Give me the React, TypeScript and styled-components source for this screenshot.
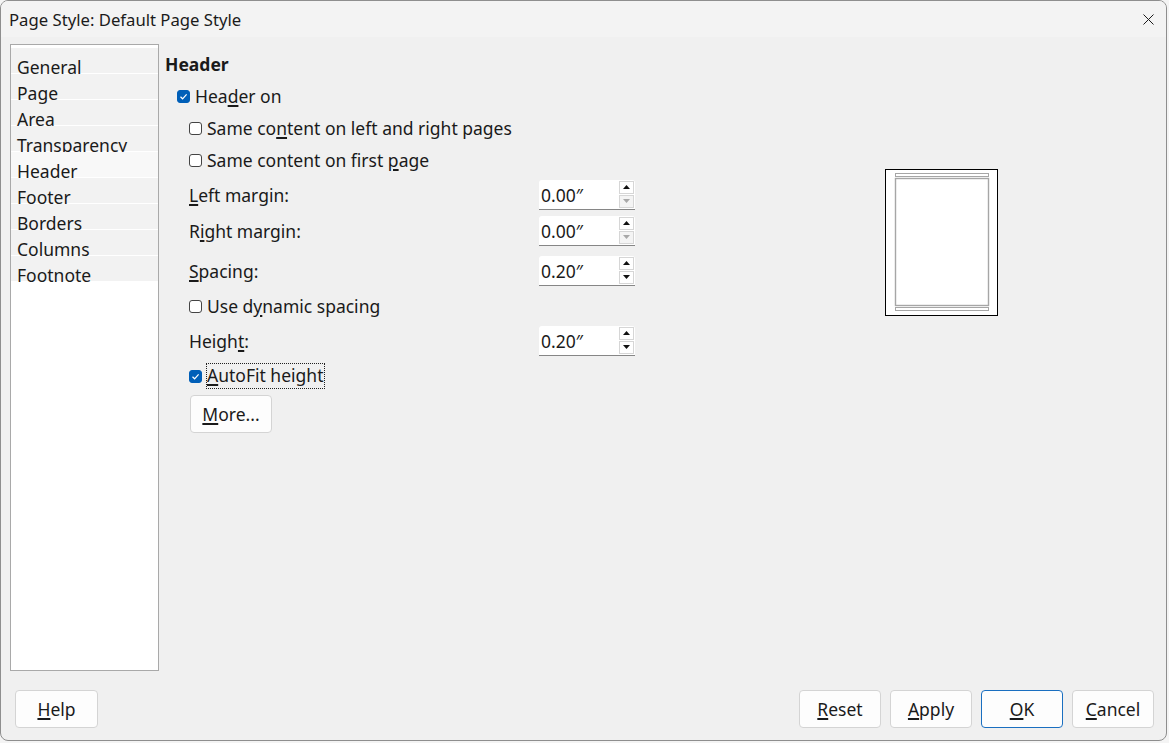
import React from 'react';
import styled, { createGlobalStyle } from 'styled-components';

const GlobalStyle = createGlobalStyle`
  html, body {
    margin: 0;
    padding: 0;
    background: #f4f4f4;
  }
  body {
    font-family: "Noto Sans", "Open Sans", sans-serif;
    color: #1a1a1a;
  }
`

const Window = styled.div`
  width: 1167px;
  height: 741px;
  box-sizing: border-box;
  border: 1px solid #8e8e8e;
  border-radius: 8px;
  overflow: hidden;
  background: #f0f0f0;
  display: flex;
  flex-direction: column;
`
const TitleBar = styled.div`
  height: 36px;
  flex-shrink: 0;
  background: #f3f3f3;
  display: flex;
  align-items: center;
  justify-content: space-between;
  padding-left: 8px;
`
const Title = styled.div`
  font-size: 16.7px;
  color: #1b1b1b;
`
const CloseButton = styled.div`
  width: 36px;
  height: 36px;
  display: flex;
  align-items: center;
  justify-content: center;
`
const Main = styled.div`
  flex: 1;
  display: flex;
  align-items: flex-start;
  padding: 7px 0 0 9px;
`
const TabList = styled.div`
  width: 149px;
  height: 627px;
  box-sizing: border-box;
  border: 1px solid #a9a9a9;
  background: #ffffff;
  padding-top: 3px;
  flex-shrink: 0;
`
const Tab = styled.div<{ $active?: boolean }>`
  height: 25px;
  border-bottom: 1px solid #ffffff;
  background: ${p => (p.$active ? '#f8f8f8' : '#f2f2f2')};
  position: ${p => (p.$active ? 'relative' : 'static')};
  padding-left: 6px;
  font-size: 17.5px;
  line-height: 22px;
  display: flex;
  align-items: flex-end;
  white-space: nowrap;
`
const TabText = styled.span`
  position: relative;
  top: 5px;
`
const Content = styled.div`
  flex: 1;
  display: flex;
  margin-left: 6px;
  padding-top: 5px;
`
const Form = styled.div`
  display: flex;
  flex-direction: column;
  width: 470px;
`
const Heading = styled.div`
  height: 30px;
  display: flex;
  align-items: center;
  font-size: 17.5px;
  font-weight: 700;
`
const Row = styled.div<{ $gap: number; $indent: number }>`
  height: 30px;
  display: flex;
  align-items: center;
  margin-top: ${p => p.$gap}px;
  padding-left: ${p => p.$indent}px;
  font-size: 17.5px;
`
const Label = styled.div`
  width: 350px;
`
const Mn = styled.span`
  text-decoration: underline;
  text-decoration-thickness: 2px;
  text-underline-offset: 2px;
`
const Box = styled.span<{ $checked?: boolean }>`
  width: 13px;
  height: 13px;
  box-sizing: border-box;
  border-radius: 3px;
  border: 1px solid ${p => (p.$checked ? '#005fb8' : '#444444')};
  background: ${p => (p.$checked ? '#005fb8' : '#ffffff')};
  display: inline-flex;
  align-items: center;
  justify-content: center;
  margin-right: 5px;
  flex-shrink: 0;
`
const FocusText = styled.span`
  outline: 1px dotted #202020;
  padding: 0 1px 2px 0;
  line-height: 22px;
`
const Spin = styled.div`
  width: 96px;
  height: 30px;
  box-sizing: border-box;
  background: #ffffff;
  border-bottom: 1px solid #868686;
  border-radius: 3px 3px 0 0;
  display: flex;
  align-items: center;
  justify-content: space-between;
  padding: 0 1px 0 2px;
`
const SpinValue = styled.span`
  font-size: 17.5px;
`
const SpinButtons = styled.div`
  display: flex;
  flex-direction: column;
  gap: 1px;
  margin-top: -1px;
`
const SpinButton = styled.div<{ $disabled?: boolean }>`
  width: 15px;
  height: 13px;
  box-sizing: border-box;
  border: 1px solid #d6d6d6;
  background: ${p => (p.$disabled ? '#f4f4f4' : '#ffffff')};
  display: flex;
  align-items: center;
  justify-content: center;
  color: ${p => (p.$disabled ? '#a8a8a8' : '#111111')};
`
const Button = styled.div<{ $default?: boolean; $width?: number }>`
  width: ${p => p.$width ?? 82}px;
  height: 38px;
  box-sizing: border-box;
  border: 1px solid ${p => (p.$default ? '#1a6fc0' : '#d4d4d4')};
  border-radius: 4px;
  background: #fdfdfd;
  display: flex;
  align-items: center;
  justify-content: center;
  font-size: 17.5px;
  color: #1a1a1a;
`
const MoreWrap = styled.div`
  margin-top: 4px;
  padding-left: 25px;
`
const PreviewBox = styled.div`
  margin-top: 120px;
  margin-left: 250px;
  width: 113px;
  height: 147px;
  box-sizing: border-box;
  border: 1px solid #000000;
  background: #ffffff;
`
const Footer = styled.div`
  height: 70px;
  flex-shrink: 0;
  box-sizing: border-box;
  padding: 19px 12px 13px 14px;
  display: flex;
  justify-content: space-between;
`
const ButtonGroup = styled.div`
  display: flex;
  gap: 9px;
`

const Arrow: React.FC<{ up?: boolean }> = ({ up }) => (
  <svg width="7" height="4" viewBox="0 0 7 4">
    <path d={up ? 'M0 4 L3.5 0 L7 4 Z' : 'M0 0 L3.5 4 L7 0 Z'} fill="currentColor" />
  </svg>
)

const Check: React.FC<{ checked?: boolean }> = ({ checked }) => (
  <Box $checked={checked}>
    {checked && (
      <svg width="9" height="9" viewBox="0 0 9 9">
        <path d="M1.5 4.8 L3.6 6.8 L7.6 2.4" stroke="#ffffff" strokeWidth="1.2" fill="none" />
      </svg>
    )}
  </Box>
)

const SpinField: React.FC<{ value: string; downDisabled?: boolean }> = ({ value, downDisabled }) => (
  <Spin>
    <SpinValue>{value}</SpinValue>
    <SpinButtons>
      <SpinButton><Arrow up /></SpinButton>
      <SpinButton $disabled={downDisabled}><Arrow /></SpinButton>
    </SpinButtons>
  </Spin>
)

const tabs = ['General', 'Page', 'Area', 'Transparency', 'Header', 'Footer', 'Borders', 'Columns', 'Footnote']

export default function App() {
  return (
    <>
      <GlobalStyle />
      <Window>
        <TitleBar>
          <Title>Page Style: Default Page Style</Title>
          <CloseButton>
            <svg width="11" height="11" viewBox="0 0 11 11">
              <path d="M0.5 0.5 L10.5 10.5 M10.5 0.5 L0.5 10.5" stroke="#1a1a1a" strokeWidth="1" />
            </svg>
          </CloseButton>
        </TitleBar>
        <Main>
          <TabList>
            {tabs.map(t => (
              <Tab key={t} $active={t === 'Header'}>
                <TabText>{t}</TabText>
              </Tab>
            ))}
          </TabList>
          <Content>
            <Form>
              <Heading>Header</Heading>
              <Row $gap={2} $indent={12}>
                <Check checked />
                <span>Hea<Mn>d</Mn>er on</span>
              </Row>
              <Row $gap={2} $indent={24}>
                <Check />
                <span>Same co<Mn>n</Mn>tent on left and right pages</span>
              </Row>
              <Row $gap={2} $indent={24}>
                <Check />
                <span>Same content on first <Mn>p</Mn>age</span>
              </Row>
              <Row $gap={5} $indent={24}>
                <Label><Mn>L</Mn>eft margin:</Label>
                <SpinField value="0.00″" downDisabled />
              </Row>
              <Row $gap={6} $indent={24}>
                <Label>R<Mn>i</Mn>ght margin:</Label>
                <SpinField value="0.00″" downDisabled />
              </Row>
              <Row $gap={10} $indent={24}>
                <Label><Mn>S</Mn>pacing:</Label>
                <SpinField value="0.20″" />
              </Row>
              <Row $gap={5} $indent={24}>
                <Check />
                <span>Use d<Mn>y</Mn>namic spacing</span>
              </Row>
              <Row $gap={5} $indent={24}>
                <Label>Heigh<Mn>t</Mn>:</Label>
                <SpinField value="0.20″" />
              </Row>
              <Row $gap={5} $indent={24}>
                <Check checked />
                <FocusText><Mn>A</Mn>utoFit height</FocusText>
              </Row>
              <MoreWrap>
                <Button>
                  <span><Mn>M</Mn>ore...</span>
                </Button>
              </MoreWrap>
            </Form>
            <PreviewBox>
              <svg width="111" height="145" viewBox="0 0 111 145">
                <rect x="9.5" y="3.5" width="93" height="3" fill="none" stroke="#a6a6a6" />
                <rect x="9.5" y="8.5" width="93" height="127" fill="none" stroke="#a6a6a6" strokeWidth="1.4" />
                <rect x="9.5" y="137.5" width="93" height="3" fill="none" stroke="#a6a6a6" />
              </svg>
            </PreviewBox>
          </Content>
        </Main>
        <Footer>
          <Button $width={83}>
            <span><Mn>H</Mn>elp</span>
          </Button>
          <ButtonGroup>
            <Button><span><Mn>R</Mn>eset</span></Button>
            <Button><span><Mn>A</Mn>pply</span></Button>
            <Button $default><span><Mn>O</Mn>K</span></Button>
            <Button><span><Mn>C</Mn>ancel</span></Button>
          </ButtonGroup>
        </Footer>
      </Window>
    </>
  )
}
